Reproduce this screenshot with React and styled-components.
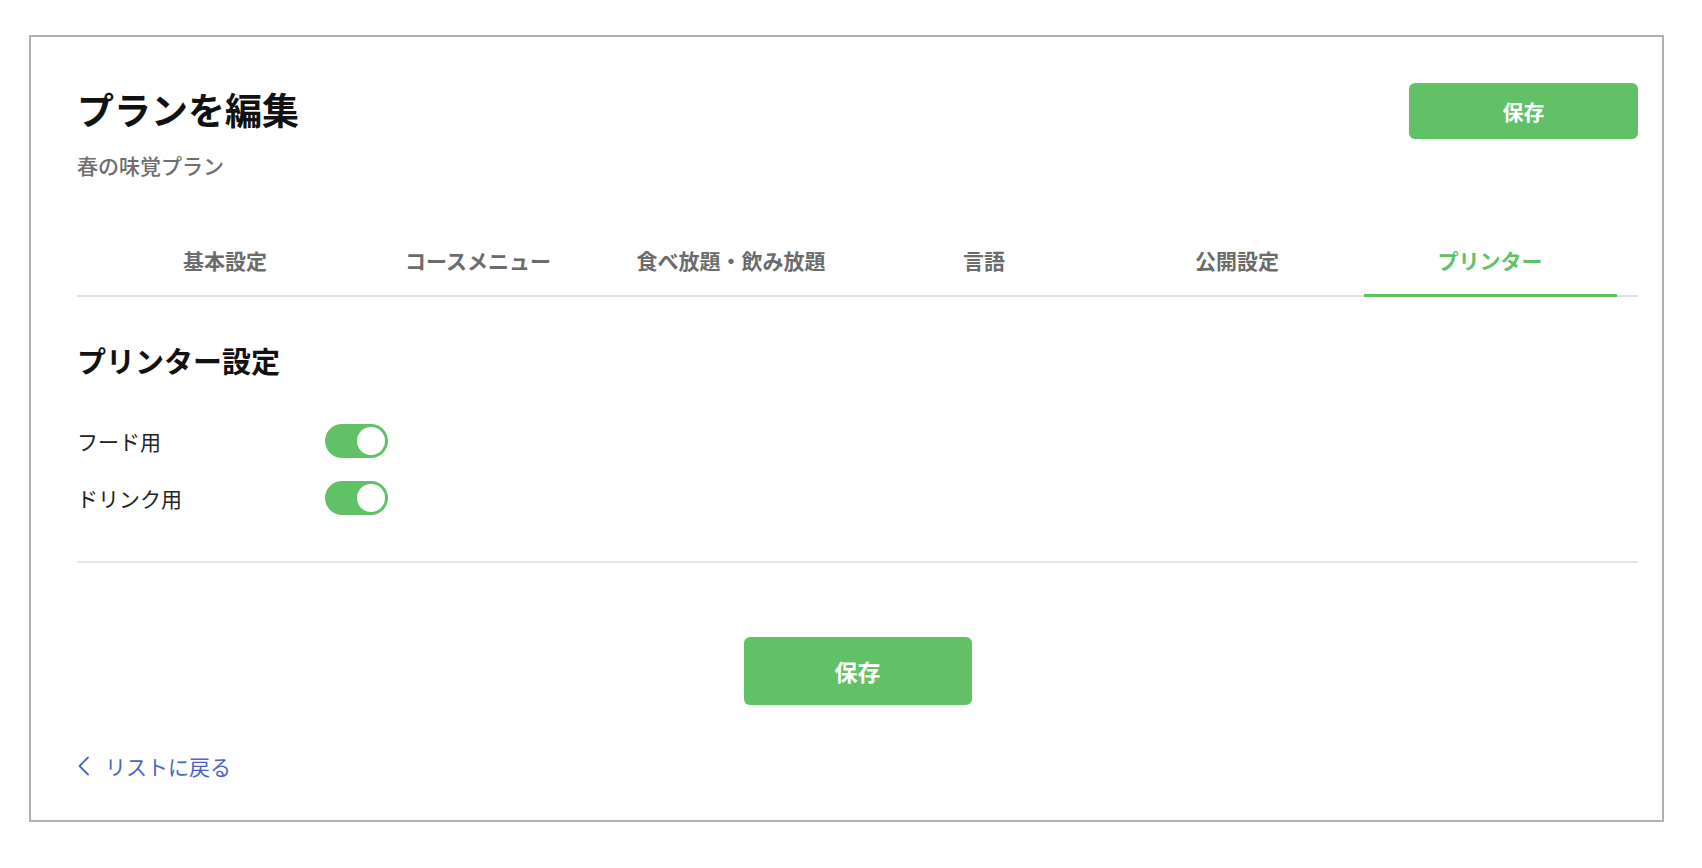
import React, { useState } from "react";
import styled, { createGlobalStyle } from "styled-components";

const GlobalStyle = createGlobalStyle`
  body {
    margin: 0;
    background: #fff;
    font-family: "Noto Sans CJK JP", "Noto Sans", sans-serif;
  }
`;

const green = "#60c167";

const Frame = styled.div`
  box-sizing: border-box;
  width: 1635px;
  margin: 35px 0 0 29px;
  padding: 46px 24px 40px 46px;
  border: 2px solid #b0b0b0;
`;

const Header = styled.div`
  display: flex;
  justify-content: space-between;
  align-items: flex-start;
`;

const Title = styled.h1`
  margin: 0;
  font-size: 37px;
  line-height: 52px;
  font-weight: 700;
  color: #111;
`;

const Subtitle = styled.p`
  margin: 16px 0 0;
  font-size: 21px;
  line-height: 28px;
  font-weight: 500;
  color: #6e6e6e;
`;

const SaveButton = styled.button`
  width: ${(p) => (p.$big ? "228px" : "229px")};
  height: ${(p) => (p.$big ? "68px" : "56px")};
  border: none;
  border-radius: 6px;
  background: ${green};
  color: #fff;
  font-family: inherit;
  font-size: ${(p) => (p.$big ? "23px" : "21px")};
  font-weight: 700;
  cursor: pointer;
`;

const TabBar = styled.div`
  display: flex;
  justify-content: center;
  margin-top: 67px;
  border-bottom: 2px solid #e0e0e0;
`;

const Tab = styled.div`
  width: 253px;
  padding-bottom: 20px;
  margin-bottom: -2px;
  border-bottom: 3px solid ${(p) => (p.$active ? green : "transparent")};
  text-align: center;
  font-size: 21px;
  line-height: 28px;
  font-weight: 700;
  color: ${(p) => (p.$active ? green : "#6b6b6b")};
  cursor: pointer;
`;

const SectionTitle = styled.h2`
  margin: 43px 0 0;
  font-size: 29px;
  line-height: 40px;
  font-weight: 700;
  color: #111;
`;

const Rows = styled.div`
  display: flex;
  flex-direction: column;
  gap: 23px;
  margin-top: 44px;
`;

const Row = styled.div`
  display: flex;
  align-items: center;
  height: 34px;
`;

const Label = styled.span`
  width: 248px;
  font-size: 21px;
  line-height: 28px;
  color: #222;
`;

const Switch = styled.button`
  box-sizing: border-box;
  display: flex;
  justify-content: ${(p) => (p.$on ? "flex-end" : "flex-start")};
  align-items: center;
  width: 63px;
  height: 34px;
  padding: 3px;
  border: none;
  border-radius: 17px;
  background: ${(p) => (p.$on ? green : "#ccc")};
  cursor: pointer;
`;

const Knob = styled.span`
  width: 28px;
  height: 28px;
  border-radius: 50%;
  background: #fff;
`;

const Divider = styled.hr`
  margin: 46px 0 0;
  border: none;
  height: 2px;
  background: #e3e3e3;
`;

const Footer = styled.div`
  display: flex;
  justify-content: center;
  margin-top: 74px;
`;

const BackLink = styled.a`
  display: flex;
  align-items: center;
  gap: 15px;
  margin-top: 47px;
  font-size: 21px;
  line-height: 28px;
  color: #4a64c6;
  text-decoration: none;
  cursor: pointer;
`;

const tabs = ["基本設定", "コースメニュー", "食べ放題・飲み放題", "言語", "公開設定", "プリンター"];

const App = () => {
  const [active, setActive] = useState(5);
  const [food, setFood] = useState(true);
  const [drink, setDrink] = useState(true);

  return (
    <>
      <GlobalStyle />
      <Frame>
        <Header>
          <div>
            <Title>プランを編集</Title>
            <Subtitle>春の味覚プラン</Subtitle>
          </div>
          <SaveButton>保存</SaveButton>
        </Header>

        <TabBar>
          {tabs.map((t, i) => (
            <Tab key={t} $active={i === active} onClick={() => setActive(i)}>
              {t}
            </Tab>
          ))}
        </TabBar>

        <SectionTitle>プリンター設定</SectionTitle>
        <Rows>
          <Row>
            <Label>フード用</Label>
            <Switch $on={food} onClick={() => setFood(!food)}>
              <Knob />
            </Switch>
          </Row>
          <Row>
            <Label>ドリンク用</Label>
            <Switch $on={drink} onClick={() => setDrink(!drink)}>
              <Knob />
            </Switch>
          </Row>
        </Rows>

        <Divider />

        <Footer>
          <SaveButton $big>保存</SaveButton>
        </Footer>

        <BackLink>
          <svg width="13" height="20" viewBox="0 0 13 20" fill="none">
            <polyline points="11,1.5 2.5,10 11,18.5" stroke="#4a64c6" strokeWidth="1.8" strokeLinecap="round" strokeLinejoin="round" />
          </svg>
          リストに戻る
        </BackLink>
      </Frame>
    </>
  );
};

export default App;
